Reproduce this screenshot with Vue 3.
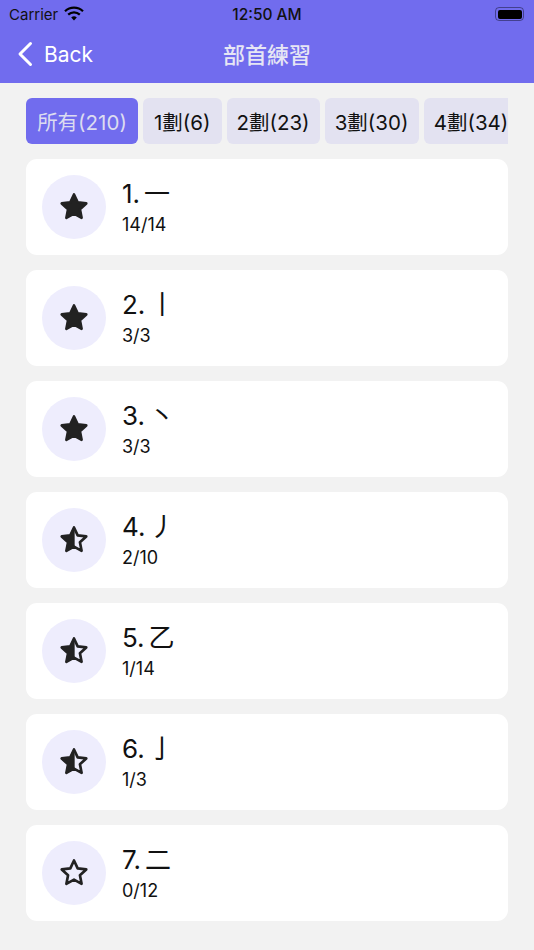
<script setup>
const tabs = [
  { label: '所有(210)', width: 112, active: true },
  { label: '1劃(6)', width: 78.5 },
  { label: '2劃(23)', width: 93 },
  { label: '3劃(30)', width: 94 },
  { label: '4劃(34)', width: 95 },
]
const rows = [
  { n: '1.', c: '一', p: '14/14', s: 'full' },
  { n: '2.', c: '丨', p: '3/3', s: 'full' },
  { n: '3.', c: '丶', p: '3/3', s: 'full' },
  { n: '4.', c: '丿', p: '2/10', s: 'half' },
  { n: '5.', c: '乙', p: '1/14', s: 'half' },
  { n: '6.', c: '亅', p: '1/3', s: 'half' },
  { n: '7.', c: '二', p: '0/12', s: 'empty' },
]
const star = 'M12 2.6l2.75 5.9 6.45.8-4.75 4.4 1.25 6.4L12 17l-5.7 3.1 1.25-6.4L2.8 9.3l6.45-.8z'
const half = 'M12 2.6v14.4l-5.7 3.1 1.25-6.4L2.8 9.3l6.45-.8z'
</script>

<template>
  <div class="page">
    <header class="head">
      <div class="status">
        <div class="left">
          <span>Carrier</span>
          <svg class="wifi" viewBox="0 0 20 15" width="20" height="15">
            <path d="M1 5.2a13 13 0 0 1 18 0" fill="none" stroke="#000" stroke-width="2.2"/>
            <path d="M4.2 8.6a8.4 8.4 0 0 1 11.6 0" fill="none" stroke="#000" stroke-width="2.2"/>
            <path d="M7.2 11.5a4 4 0 0 1 5.6 0L10 14.6z" fill="#000"/>
          </svg>
        </div>
        <span class="time">12:50 AM</span>
        <div class="battery"><i></i></div>
      </div>
      <div class="nav">
        <div class="back">
          <svg viewBox="0 0 16 26" width="16" height="26">
            <path d="M13.5 2.5L3 13l10.5 10.5" fill="none" stroke="#fff" stroke-width="3" stroke-linecap="round" stroke-linejoin="round"/>
          </svg>
          <span>Back</span>
        </div>
        <div class="title">部首練習</div>
      </div>
    </header>

    <main class="main">
      <div class="tabs">
        <div
          v-for="t in tabs"
          :key="t.label"
          class="tab"
          :class="{ active: t.active }"
          :style="{ width: t.width + 'px' }"
        >{{ t.label }}</div>
      </div>
      <div class="list">
        <div v-for="r in rows" :key="r.n" class="card">
          <div class="circle">
            <svg viewBox="0 0 24 24" width="32" height="32">
              <path v-if="r.s === 'full'" :d="star" fill="#222" stroke="#222" stroke-width="2" stroke-linejoin="round"/>
              <template v-else>
                <path v-if="r.s === 'half'" :d="half" fill="#222" stroke="#222" stroke-width="1" stroke-linejoin="round"/>
                <path :d="star" fill="none" stroke="#222" stroke-width="2" stroke-linejoin="round"/>
              </template>
            </svg>
          </div>
          <div class="text">
            <div class="name"><span>{{ r.n }}</span><span class="cjk">{{ r.c }}</span></div>
            <div class="prog">{{ r.p }}</div>
          </div>
        </div>
      </div>
    </main>
  </div>
</template>

<style scoped>
.page {
  width: 534px;
  height: 950px;
  overflow: hidden;
  background: #f2f2f2;
  font-family: Inter, "Noto Sans CJK TC", sans-serif;
  color: #111;
}
.head {
  height: 83px;
  background: #716cee;
}
.status {
  height: 28px;
  position: relative;
  display: flex;
  align-items: center;
  justify-content: space-between;
  padding: 0 10px 0 9px;
  font-size: 15px;
  font-weight: 400;
  color: #111;
}
.left {
  display: flex;
  align-items: center;
  gap: 6px;
}
.wifi {
  margin-top: -1px;
}
.time {
  position: absolute;
  left: 0;
  right: 0;
  text-align: center;
  font-size: 15.5px;
  font-weight: 500;
}
.battery {
  width: 29px;
  height: 14px;
  border: 1px solid rgba(0, 0, 0, 0.4);
  border-radius: 4px;
  padding: 1.5px;
  box-sizing: border-box;
  display: flex;
}
.battery i {
  flex: 1;
  background: #000;
  border-radius: 2px;
}
.nav {
  position: relative;
  height: 55px;
  display: flex;
  align-items: center;
  justify-content: center;
}
.back {
  position: absolute;
  left: 17px;
  top: 13px;
  display: flex;
  align-items: center;
  gap: 11px;
  color: #fff;
  font-size: 21px;
  font-weight: 380;
}
.title {
  color: #e6e6f4;
  font-size: 22px;
  font-weight: 500;
  margin-top: -6px;
}
.main {
  padding: 15px 26px 0;
}
.tabs {
  display: flex;
  gap: 5px;
  overflow: hidden;
  width: 482px;
}
.tab {
  flex: none;
  height: 46px;
  box-sizing: border-box;
  display: flex;
  align-items: center;
  justify-content: center;
  white-space: nowrap;
  border-radius: 6px;
  background: #e3e2f1;
  font-size: 20.5px;
  font-weight: 380;
  color: #111;
}
.tab.active {
  background: #716cee;
  color: #dcdcf0;
}
.list {
  margin-top: 15px;
  display: flex;
  flex-direction: column;
  gap: 15px;
}
.card {
  height: 96px;
  background: #fff;
  border-radius: 11px;
  display: flex;
  align-items: center;
  padding-left: 16px;
  gap: 16px;
}
.circle {
  width: 64px;
  height: 64px;
  border-radius: 50%;
  background: #eeedfd;
  display: flex;
  align-items: center;
  justify-content: center;
}
.text {
  display: flex;
  flex-direction: column;
  gap: 4px;
  margin-top: -1px;
}
.name {
  display: flex;
  gap: 4px;
  font-size: 26px;
  line-height: 32px;
  font-weight: 380;
  color: #111;
}
.cjk {
  font-weight: 400;
}
.prog {
  font-size: 18px;
  line-height: 22px;
  font-weight: 380;
  color: #111;
}
</style>
